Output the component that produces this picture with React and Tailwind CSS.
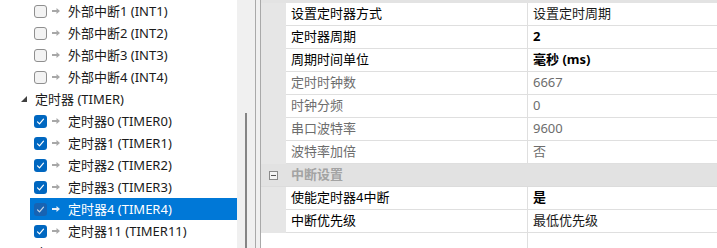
import React from "react";

const FONT = "font-['Noto_Sans','Noto_Sans_CJK_SC',sans-serif]";

function Arrow({ className }) {
  return (
    <svg width="8" height="8" viewBox="0 0 8 8" className={className}>
      <path d="M0 3h4.5V1L8 4 4.5 7V5H0z" fill="currentColor" />
    </svg>
  );
}

function Check({ checked, selected }) {
  if (!checked) {
    return (
      <div className="w-[13px] h-[13px] rounded-[3px] border border-[#8f8f8f] bg-[#f3f3f3] shrink-0" />
    );
  }
  return (
    <div
      className={
        "w-[13px] h-[13px] rounded-[3px] flex items-center justify-center shrink-0 " +
        (selected ? "bg-[#1763b3]" : "bg-[#0067c0]")
      }
    >
      <svg width="9" height="9" viewBox="0 0 9 9">
        <path
          d="M1.5 4.8l2 2 4-4.6"
          fill="none"
          stroke={selected ? "#c8d8ea" : "#ffffff"}
          strokeWidth="1.2"
          strokeLinecap="round"
          strokeLinejoin="round"
        />
      </svg>
    </div>
  );
}

function Expander() {
  return (
    <svg width="6" height="6" viewBox="0 0 6 6" className="text-[#404040]">
      <path d="M6 0V6H0z" fill="currentColor" />
    </svg>
  );
}

const tree = [
  { type: "child", text: "外部中断1 (INT1)", checked: false },
  { type: "child", text: "外部中断2 (INT2)", checked: false },
  { type: "child", text: "外部中断3 (INT3)", checked: false },
  { type: "child", text: "外部中断4 (INT4)", checked: false },
  { type: "parent", text: "定时器 (TIMER)" },
  { type: "child", text: "定时器0 (TIMER0)", checked: true },
  { type: "child", text: "定时器1 (TIMER1)", checked: true },
  { type: "child", text: "定时器2 (TIMER2)", checked: true },
  { type: "child", text: "定时器3 (TIMER3)", checked: true },
  { type: "child", text: "定时器4 (TIMER4)", checked: true, selected: true },
  { type: "child", text: "定时器11 (TIMER11)", checked: true },
  { type: "parent", text: "串口 (UART)" },
];

function TreeRow({ item }) {
  if (item.type === "parent") {
    return (
      <div className="h-[22px] flex items-center shrink-0">
        <div className="w-[21px]" />
        <Expander />
        <div className="w-[8px]" />
        <span className="text-[13px] leading-[22px] text-[#1a1a1a]">{item.text}</span>
      </div>
    );
  }
  return (
    <div className="h-[22px] flex items-center shrink-0">
      <div className="w-[30px] shrink-0" />
      <div
        className={
          "flex-1 h-full flex items-center " + (item.selected ? "bg-[#0078d7]" : "")
        }
      >
        <div className="w-[4px]" />
        <Check checked={item.checked} selected={item.selected} />
        <div className="w-[5px]" />
        <Arrow className={item.selected ? "text-[#e8eef6]" : "text-[#a8a8a8]"} />
        <div className="w-[8px]" />
        <span
          className={
            "text-[13px] leading-[22px] whitespace-nowrap " +
            (item.selected ? "text-white" : "text-[#1a1a1a]")
          }
        >
          {item.text}
        </span>
      </div>
    </div>
  );
}

const props = [
  { name: "设置定时器方式", value: "设置定时周期" },
  { name: "定时器周期", value: "2", bold: true },
  { name: "周期时间单位", value: "毫秒 (ms)", bold: true },
  { name: "定时时钟数", value: "6667", gray: true },
  { name: "时钟分频", value: "0", gray: true },
  { name: "串口波特率", value: "9600", gray: true },
  { name: "波特率加倍", value: "否", gray: true },
  { category: true, name: "中断设置" },
  { name: "使能定时器4中断", value: "是", bold: true },
  { name: "中断优先级", value: "最低优先级" },
];

function PropRow({ p }) {
  if (p.category) {
    return (
      <div className="h-[23px] flex items-center bg-[#e2e2e2] border-b border-[#dcdcdc] shrink-0">
        <div className="w-[25px] flex items-center justify-center">
          <div className="w-[9px] h-[9px] border border-[#8a8a8a] flex items-center justify-center bg-[#f4f4f4]">
            <div className="w-[5px] h-px bg-[#555555]" />
          </div>
        </div>
        <span className="pl-[5px] text-[13px] font-bold text-[#a3a3a3]">{p.name}</span>
      </div>
    );
  }
  const nameColor = p.gray ? "text-[#6d6d6d]" : "text-[#000000]";
  const valueCls = p.gray
    ? "text-[#6d6d6d]"
    : p.bold
    ? "text-[#000000] font-bold"
    : "text-[#1a1a1a]";
  return (
    <div className="h-[23px] flex shrink-0">
      <div className="w-[25px] bg-[#e6e6e6] shrink-0" />
      <div className="w-[242px] bg-white border-b border-r border-[#dfdfdf] flex items-center pl-[5px] shrink-0">
        <span className={"text-[13px] whitespace-nowrap " + nameColor}>{p.name}</span>
      </div>
      <div className="flex-1 bg-white border-b border-[#dfdfdf] flex items-center pl-[5px]">
        <span className={"text-[13px] whitespace-nowrap " + valueCls}>{p.value}</span>
      </div>
    </div>
  );
}

export default function App() {
  return (
    <div className={"w-[717px] h-[248px] flex overflow-hidden bg-white " + FONT}>
      <div className="w-[237px] h-full bg-white flex flex-col overflow-hidden shrink-0">
        {tree.map((t, i) => (
          <TreeRow key={i} item={t} />
        ))}
      </div>
      <div className="w-[24px] h-full bg-[#f0f0f0] relative shrink-0 flex">
        <div className="absolute left-[8px] top-[113px] w-[2px] h-[140px] bg-[#858585]" />
        <div className="w-[18px]" />
        <div className="w-px h-full bg-[#a9a9a9]" />
        <div className="w-[4px]" />
        <div className="w-px h-full bg-[#a9a9a9]" />
      </div>
      <div className="flex-1 h-full flex flex-col bg-white">
        <div className="h-[3px] bg-[#e3e3e3] shrink-0" />
        {props.map((p, i) => (
          <PropRow key={i} p={p} />
        ))}
        <div className="flex-1 flex">
          <div className="w-[267px] border-r border-[#dfdfdf]" />
          <div className="flex-1" />
        </div>
      </div>
    </div>
  );
}
